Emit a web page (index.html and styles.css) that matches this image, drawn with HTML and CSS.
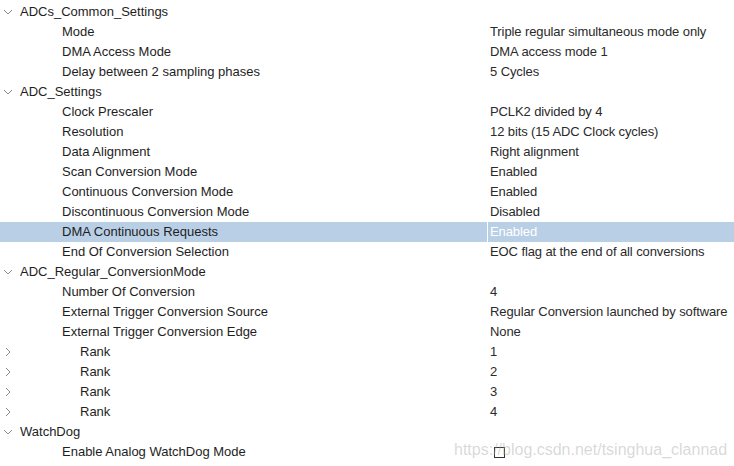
FILE: index.html
```html
<!DOCTYPE html>
<html>
<head>
<meta charset="utf-8">
<link rel="stylesheet" href="styles.css">
</head>
<body>
<div class="tree">
  <div class="row group"><span class="tog"><svg width="10" height="10" viewBox="0 0 10 10"><polyline points="1,3 5,7 9,3" /></svg></span><span class="label">ADCs_Common_Settings</span><span class="val"></span></div>
  <div class="row"><span class="label l1">Mode</span><span class="val">Triple regular simultaneous mode only</span></div>
  <div class="row"><span class="label l1">DMA Access Mode</span><span class="val">DMA access mode 1</span></div>
  <div class="row"><span class="label l1">Delay between 2 sampling phases</span><span class="val">5 Cycles</span></div>
  <div class="row group"><span class="tog"><svg width="10" height="10" viewBox="0 0 10 10"><polyline points="1,3 5,7 9,3" /></svg></span><span class="label">ADC_Settings</span><span class="val"></span></div>
  <div class="row"><span class="label l1">Clock Prescaler</span><span class="val">PCLK2 divided by 4</span></div>
  <div class="row"><span class="label l1">Resolution</span><span class="val">12 bits (15 ADC Clock cycles)</span></div>
  <div class="row"><span class="label l1">Data Alignment</span><span class="val">Right alignment</span></div>
  <div class="row"><span class="label l1">Scan Conversion Mode</span><span class="val">Enabled</span></div>
  <div class="row"><span class="label l1">Continuous Conversion Mode</span><span class="val">Enabled</span></div>
  <div class="row"><span class="label l1">Discontinuous Conversion Mode</span><span class="val">Disabled</span></div>
  <div class="row selected"><span class="label l1">DMA Continuous Requests</span><span class="val">Enabled</span></div>
  <div class="row"><span class="label l1">End Of Conversion Selection</span><span class="val">EOC flag at the end of all conversions</span></div>
  <div class="row group"><span class="tog"><svg width="10" height="10" viewBox="0 0 10 10"><polyline points="1,3 5,7 9,3" /></svg></span><span class="label">ADC_Regular_ConversionMode</span><span class="val"></span></div>
  <div class="row"><span class="label l1">Number Of Conversion</span><span class="val">4</span></div>
  <div class="row"><span class="label l1">External Trigger Conversion Source</span><span class="val">Regular Conversion launched by software</span></div>
  <div class="row"><span class="label l1">External Trigger Conversion Edge</span><span class="val">None</span></div>
  <div class="row"><span class="tog"><svg width="10" height="10" viewBox="0 0 10 10"><polyline points="3,1 7,5 3,9" /></svg></span><span class="label l2">Rank</span><span class="val">1</span></div>
  <div class="row"><span class="tog"><svg width="10" height="10" viewBox="0 0 10 10"><polyline points="3,1 7,5 3,9" /></svg></span><span class="label l2">Rank</span><span class="val">2</span></div>
  <div class="row"><span class="tog"><svg width="10" height="10" viewBox="0 0 10 10"><polyline points="3,1 7,5 3,9" /></svg></span><span class="label l2">Rank</span><span class="val">3</span></div>
  <div class="row"><span class="tog"><svg width="10" height="10" viewBox="0 0 10 10"><polyline points="3,1 7,5 3,9" /></svg></span><span class="label l2">Rank</span><span class="val">4</span></div>
  <div class="row group"><span class="tog"><svg width="10" height="10" viewBox="0 0 10 10"><polyline points="1,3 5,7 9,3" /></svg></span><span class="label">WatchDog</span><span class="val"></span></div>
  <div class="row"><span class="label l1">Enable Analog WatchDog Mode</span><span class="val"><span class="check"></span></span></div>
</div>
<div class="watermark">https://blog.csdn.net/tsinghua_clannad</div>
</body>
</html>
```
FILE: styles.css
```css
html, body {
  margin: 0;
  padding: 0;
  background: #ffffff;
}
body {
  font-family: "Liberation Sans", Arial, sans-serif;
  font-size: 13px;
  color: #1e1e1e;
  width: 734px;
  height: 466px;
  overflow: hidden;
  position: relative;
}
.tree {
  padding-top: 2px;
}
.row {
  display: grid;
  grid-template-columns: 20px 467px 1fr;
  height: 20px;
  line-height: 20px;
}
.tog {
  grid-column: 1;
  display: flex;
  align-items: center;
  padding-left: 3px;
}
.tog svg {
  display: block;
}
.tog polyline {
  fill: none;
  stroke: #8a8a8a;
  stroke-width: 1;
}
.label {
  grid-column: 2;
  white-space: nowrap;
}
.label.l1 {
  padding-left: 42px;
}
.label.l2 {
  padding-left: 60px;
}
.val {
  grid-column: 3;
  padding-left: 3px;
  white-space: nowrap;
  color: #2a2a2a;
  letter-spacing: -0.1px;
  display: flex;
  align-items: center;
}
.selected {
  background: #b9cfe6;
}
.selected .val {
  color: #ffffff;
  border-left: 1px solid #ffffff;
  padding-left: 2px;
}
.check {
  display: inline-block;
  width: 9px;
  height: 9px;
  border: 1px solid #333333;
  margin-left: 4px;
  margin-top: 0;
}
.watermark {
  position: absolute;
  left: 454px;
  top: 441px;
  font-size: 16px;
  color: rgba(170, 170, 170, 0.45);
  font-family: "Liberation Sans", Arial, sans-serif;
}
```
